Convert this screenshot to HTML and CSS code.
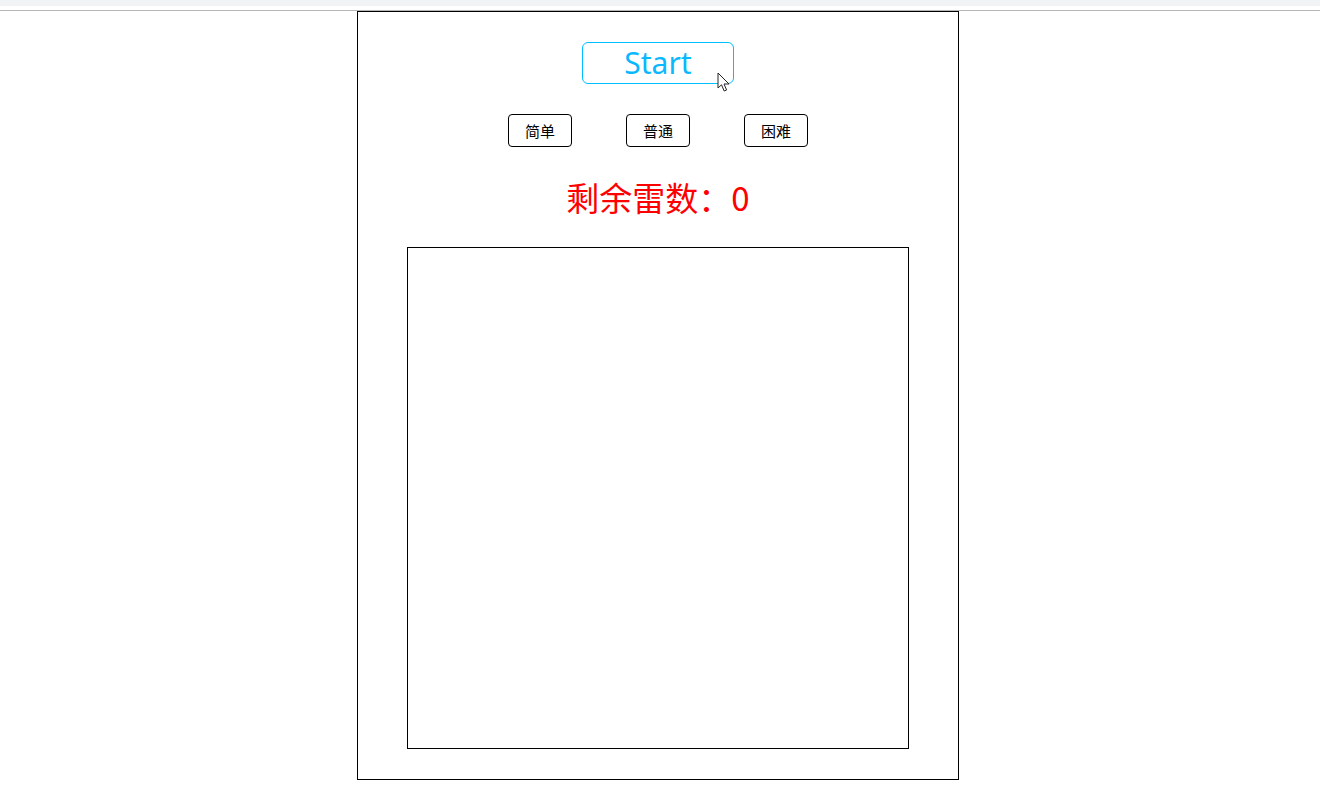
FILE: index.html
```html
<!DOCTYPE html>
<html lang="zh-CN">
<head>
<meta charset="utf-8">
<title>扫雷</title>
<link rel="stylesheet" href="styles.css">
</head>
<body>
<div class="chrome"></div>
<div class="game">
  <div class="start-row">
    <button class="start">Start</button>
    <svg class="cursor" width="14" height="21" viewBox="0 0 14 21"><path d="M1 1 L1 16 L4.5 12.8 L7.2 19 L9.6 18 L7 12 L12 12 Z" fill="#fff" stroke="#222" stroke-width="1" stroke-linejoin="round"/></svg>
  </div>
  <div class="modes">
    <button class="mode">简单</button>
    <button class="mode">普通</button>
    <button class="mode">困难</button>
  </div>
  <div class="count">剩余雷数：0</div>
  <div class="board"></div>
</div>
</body>
</html>
```
FILE: styles.css
```css
html, body {
  margin: 0;
  padding: 0;
  background: #fff;
  font-family: "Noto Sans", "Noto Sans CJK SC", sans-serif;
}
.chrome {
  height: 10px;
  background: linear-gradient(#f2f3f5 0, #f2f3f5 6px, #fff 6px, #fff 10px);
  border-bottom: 1px solid #b6b6b6;
}
.game {
  width: 602px;
  height: 769px;
  margin-left: 357px;
  border: 1px solid #000;
  padding-top: 30px;
  box-sizing: border-box;
  display: flex;
  flex-direction: column;
  align-items: center;
}
.start-row {
  position: relative;
  height: 42px;
}
.start {
  width: 152px;
  height: 42px;
  border: 1px solid #00bfff;
  border-radius: 6px;
  background: #fff;
  color: #0bb8ff;
  font-family: "Noto Sans", "Noto Sans CJK SC", sans-serif;
  font-size: 30px;
  line-height: 40px;
  padding: 0;
  margin: 0;
}
.cursor {
  position: absolute;
  left: 135px;
  top: 30px;
}
.modes {
  margin-top: 30px;
  display: flex;
  gap: 54px;
}
.mode {
  width: 64px;
  height: 33px;
  border: 1px solid #000;
  border-radius: 4px;
  background: #fff;
  color: #000;
  font-family: "Noto Sans CJK SC", sans-serif;
  font-size: 15px;
  padding: 0;
  margin: 0;
}
.count {
  margin-top: 30px;
  height: 40px;
  line-height: 40px;
  color: #ff0000;
  font-family: "Noto Sans CJK SC", sans-serif;
  font-size: 33px;
  white-space: nowrap;
}
.board {
  margin-top: 30px;
  width: 500px;
  height: 500px;
  border: 1px solid #000;
}
```
